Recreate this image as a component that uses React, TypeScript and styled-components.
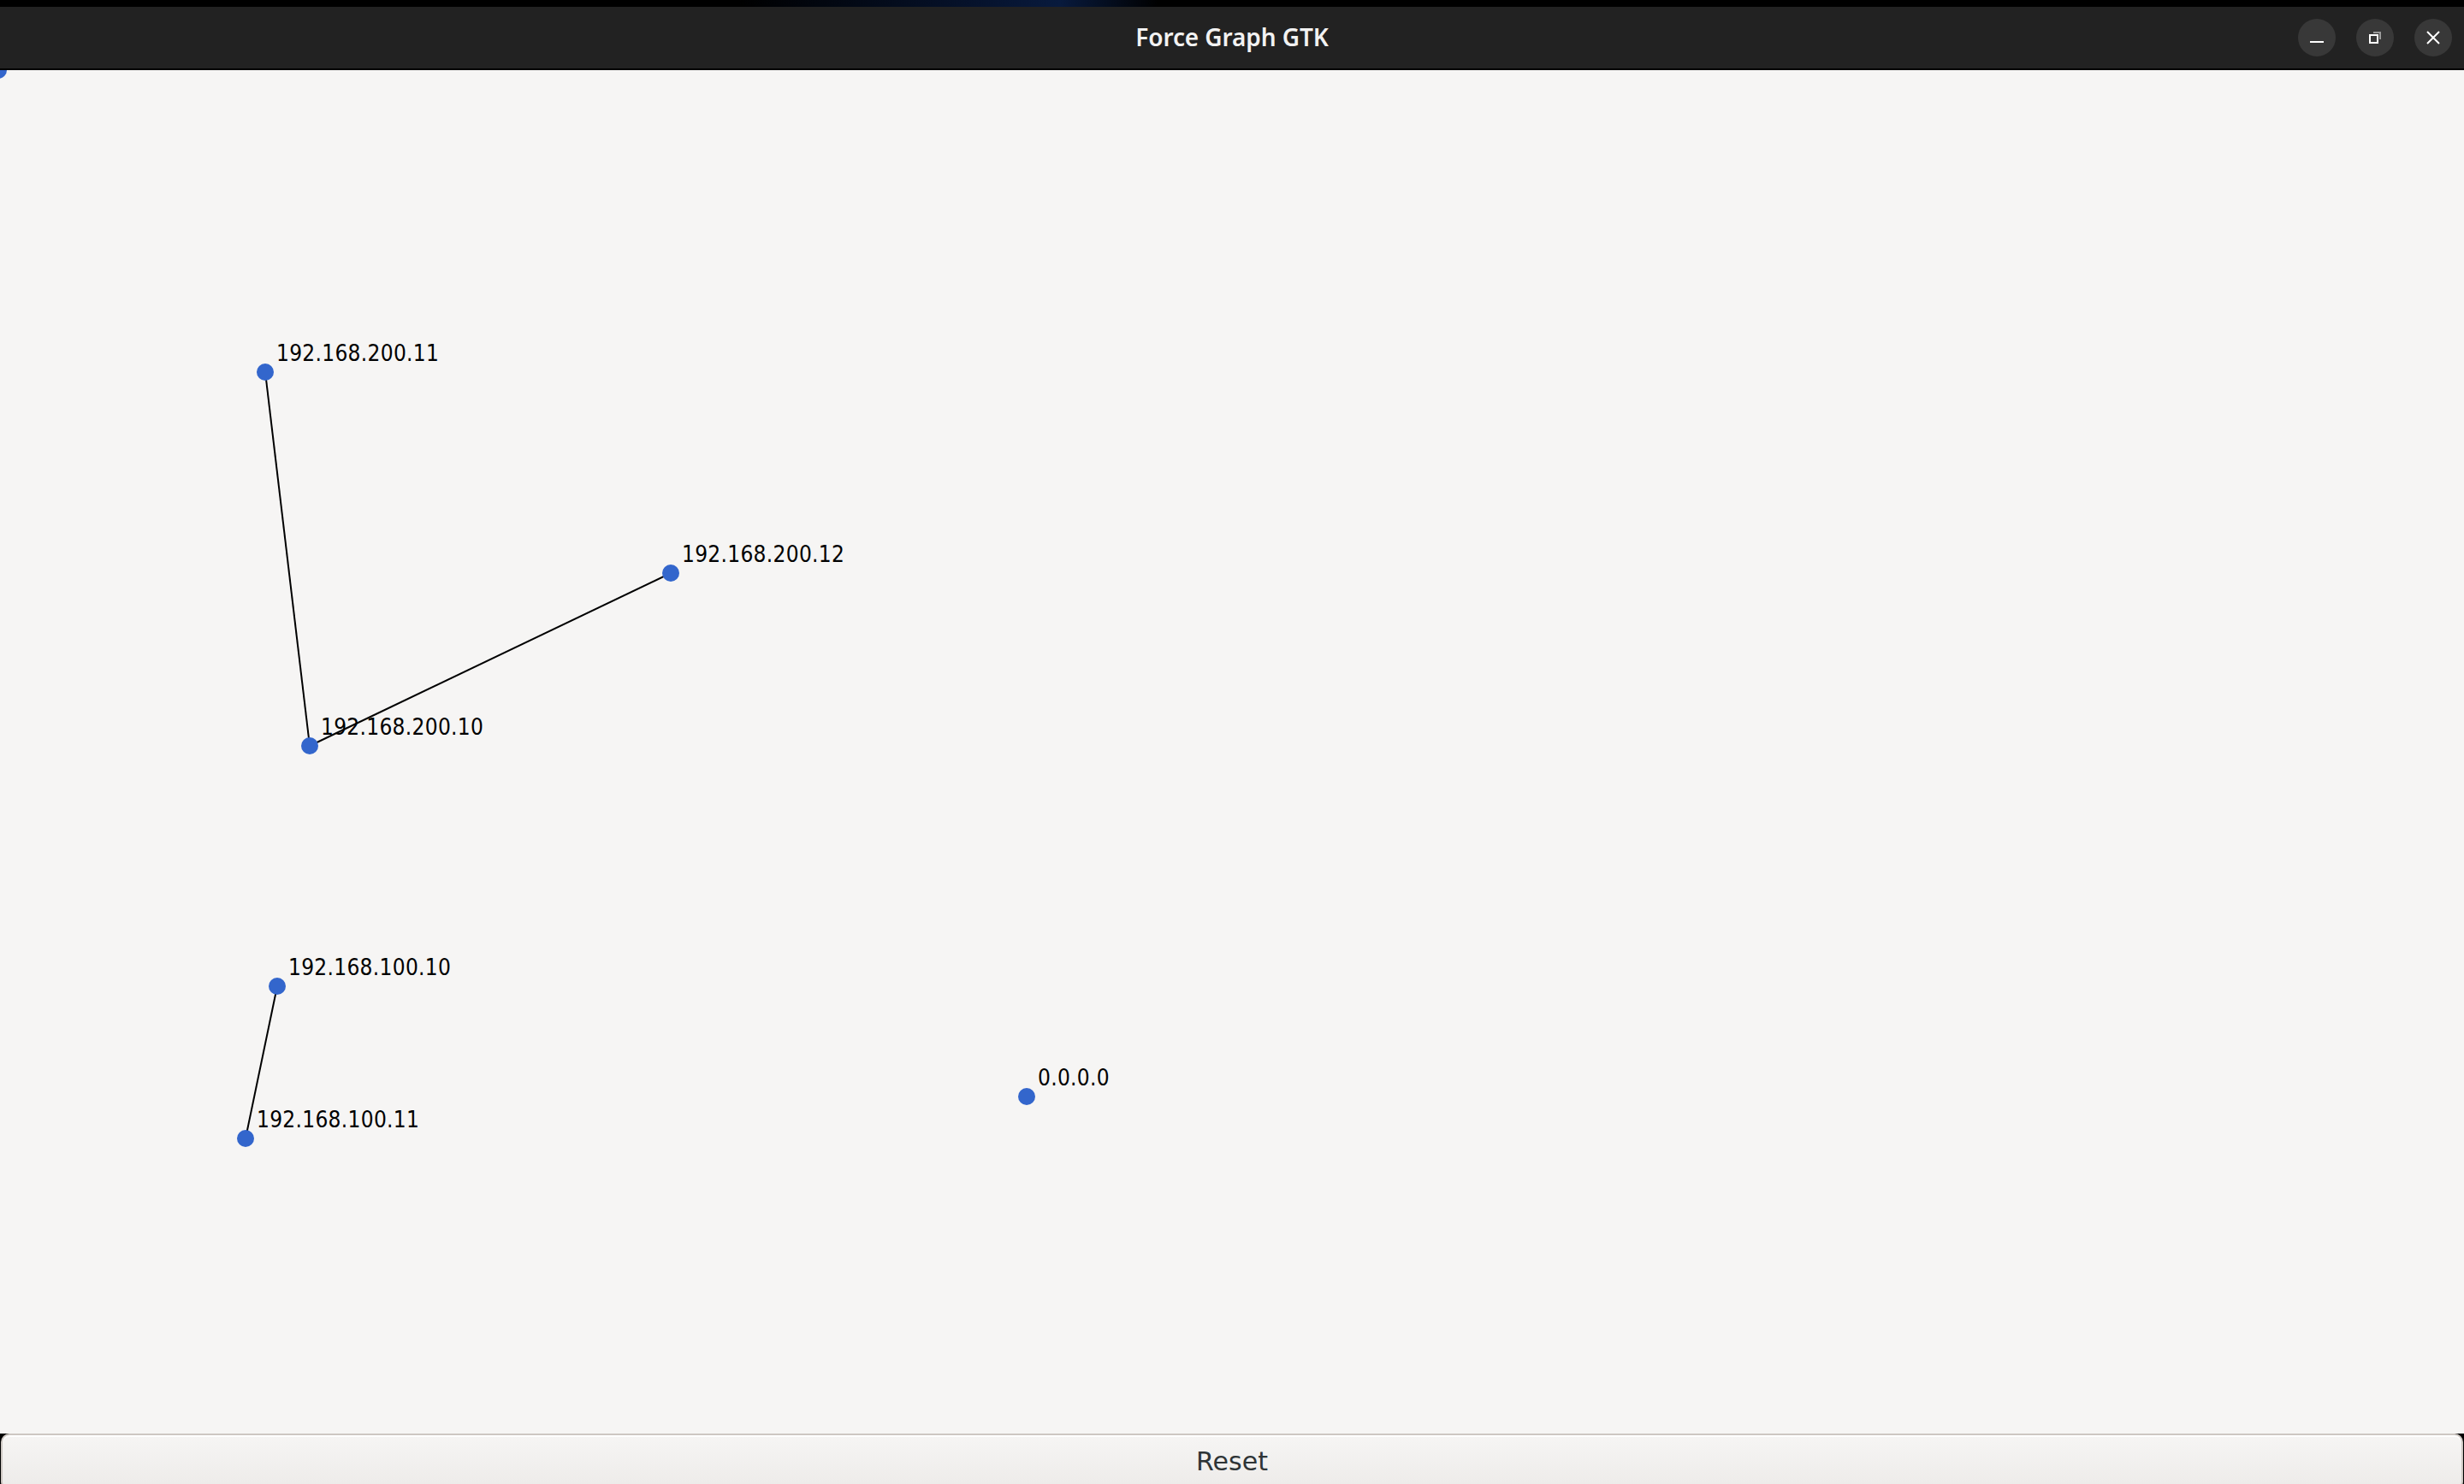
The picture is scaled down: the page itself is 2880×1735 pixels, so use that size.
import React from "react";
import styled, { createGlobalStyle } from "styled-components";

const GlobalStyle = createGlobalStyle`
html, body {
  margin: 0;
  padding: 0;
  background: #000000;
}
#root {
  height: 100vh;
}
`;

const Window = styled.div`
display: flex;
flex-direction: column;
height: 100vh;
overflow: hidden;
`;

const Desktop = styled.div`
height: 8px;
flex-shrink: 0;
background: linear-gradient(90deg, #000 0%, #000 30%, #06132e 40%, #081a3d 43%, #000 47%, #000 100%);
`;

const TitleBar = styled.header`
position: relative;
height: 72px;
flex-shrink: 0;
background-color: #222222;
border-bottom: 2px solid #000000;
display: flex;
align-items: center;
justify-content: center;
`;

const Title = styled.h1`
margin: 0;
padding-bottom: 3px;
color: #f2f2f2;
font-family: "Noto Sans", "Open Sans", sans-serif;
font-weight: 600;
font-size: 28px;
letter-spacing: -0.1px;
`;

const Controls = styled.div`
position: absolute;
right: 14px;
top: 14px;
display: flex;
gap: 24px;
`;

const ControlBtn = styled.button`
width: 44px;
height: 44px;
padding: 0;
border: none;
border-radius: 50%;
background-color: #383838;
display: flex;
align-items: center;
justify-content: center;
`;

const Canvas = styled.main`
height: 1594px;
flex-shrink: 0;
background-color: #f6f5f4;
`;

const Graph = styled.svg`
display: block;
width: 100%;
height: 100%;
`;

const Edge = styled.line`
stroke: #000000;
stroke-width: 2;
`;

const Node = styled.circle`
fill: #3366cc;
`;

const Label = styled.text`
font-family: "DejaVu Sans Condensed", "DejaVu Sans", sans-serif;
font-stretch: condensed;
font-size: 26px;
letter-spacing: 0.3px;
fill: #000000;
`;

const ResetButton = styled.button`
height: 66px;
flex-shrink: 0;
margin: 0 1px;
border: 2px solid #cdc7c2;
border-radius: 10px;
box-shadow: inset 0 2px #ffffff;
background: linear-gradient(#f6f5f4, #edebe9);
color: #2e3436;
font-family: "DejaVu Sans", sans-serif;
font-size: 30px;
padding: 0 0 2px 0;
`;

type GNode = { id: string; x: number; y: number; label?: boolean };

// the first node sits under the title bar, its label is hidden there
const nodes: GNode[] = [
  { id: "edge-node", x: -2, y: 0, label: false },
  { id: "192.168.200.11", x: 310, y: 353 },
  { id: "192.168.200.12", x: 784, y: 588 },
  { id: "192.168.200.10", x: 362, y: 790 },
  { id: "192.168.100.10", x: 324, y: 1071 },
  { id: "192.168.100.11", x: 287, y: 1249 },
  { id: "0.0.0.0", x: 1200, y: 1200 },
];

const edges: [string, string][] = [
  ["192.168.200.11", "192.168.200.10"],
  ["192.168.200.12", "192.168.200.10"],
  ["192.168.100.10", "192.168.100.11"],
];

const find = (id: string) => nodes.find((n) => n.id === id)!;

function App() {
  return (
    <Window>
      <GlobalStyle />
      <Desktop />
      <TitleBar>
        <Title>Force Graph GTK</Title>
        <Controls>
          <ControlBtn aria-label="Minimize">
            <svg width="16" height="16" viewBox="0 0 16 16">
              <rect x="0" y="12" width="16" height="2" fill="#ffffff" />
            </svg>
          </ControlBtn>
          <ControlBtn aria-label="Restore">
            <svg width="16" height="16" viewBox="0 0 16 16">
              <path d="M6 2 H14 V10" fill="none" stroke="#9a9a9a" strokeWidth="2" />
              <rect x="2" y="5" width="9" height="9" fill="none" stroke="#ffffff" strokeWidth="2" />
            </svg>
          </ControlBtn>
          <ControlBtn aria-label="Close">
            <svg width="16" height="16" viewBox="0 0 16 16">
              <path d="M1 1 L15 15 M15 1 L1 15" stroke="#ffffff" strokeWidth="2" />
            </svg>
          </ControlBtn>
        </Controls>
      </TitleBar>
      <Canvas>
        <Graph>
          {edges.map(([a, b]) => {
            const s = find(a);
            const t = find(b);
            return <Edge key={a + b} x1={s.x} y1={s.y} x2={t.x} y2={t.y} />;
          })}
          {nodes.map((n) => (
            <g key={n.id}>
              <Node cx={n.x} cy={n.y} r={10} />
              {n.label !== false && (
                <Label x={n.x + 13} y={n.y - 13.5}>
                  {n.id}
                </Label>
              )}
            </g>
          ))}
        </Graph>
      </Canvas>
      <ResetButton>Reset</ResetButton>
    </Window>
  );
}

export default App;
